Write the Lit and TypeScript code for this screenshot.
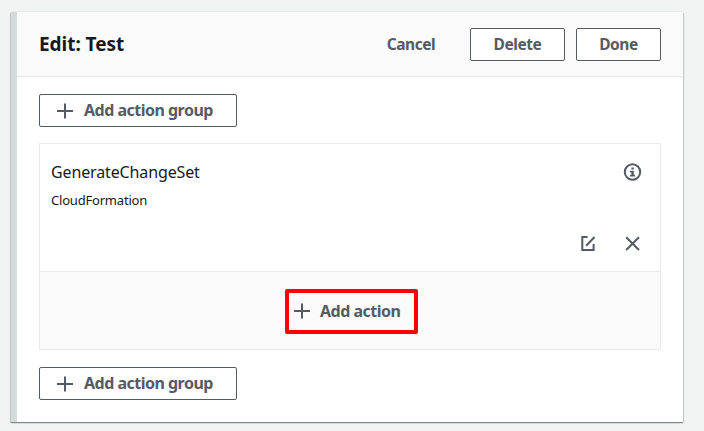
import { LitElement, html, css, svg } from "lit";
import { customElement, property } from "lit/decorators.js";

@customElement("glyph-icon")
class GlyphIcon extends LitElement {
  @property() name = "plus";

  static styles = css`
    :host { display: block; width: 18px; height: 18px; flex: none; }
    svg { display: block; overflow: visible; fill: none; stroke: #545b64; stroke-width: 2; }
    .solid { fill: #545b64; stroke: none; }
  `;

  private shape() {
    switch (this.name) {
      case "info":
        return svg`<circle cx="9.5" cy="9" r="7.7"></circle>
          <path class="solid" d="M8.4 4.4h2.4v2H8.4zM7 7.8h3.8v3.9h1.2v1.8H7v-1.8h1.4V9.4H7z"></path>`;
      case "edit":
        return svg`<path d="M8.6 3H3.3v13h11.3v-6M7.2 11.8L15.5 3"></path>`;
      case "close":
        return svg`<path d="M3.2 3.2l12.8 12.8M16 3.2L3.2 16"></path>`;
      default:
        return svg`<path d="M9 1.5v15M1 9h16"></path>`;
    }
  }

  render() {
    return html`<svg width="18" height="18" viewBox="0 0 18 18">${this.shape()}</svg>`;
  }
}

@customElement("app-root")
class AppRoot extends LitElement {
  static styles = css`
    :host {
      display: block; box-sizing: border-box; height: 431px; padding: 12px 21px 9px 11px;
      background: #f2f3f3; overflow: hidden;
      font-family: "Noto Sans", "Open Sans", sans-serif; color: #16191f;
    }
    * { box-sizing: border-box; }
    .panel {
      height: 410px; background: #fff; border-left: 6px solid #d5dbdb;
      box-shadow: 0 -1px 0 #e6eaea, 0 1px 1px rgba(0,28,36,.3), 1px 1px 1px rgba(0,28,36,.15), -1px 1px 1px rgba(0,28,36,.15);
    }
    .head {
      height: 65px; display: flex; align-items: center; background: #fafafa;
      border-bottom: 1px solid #e6eaea; padding: 0 22px;
    }
    h1 { margin: 0; flex: 1; font-size: 19px; line-height: 24px; font-weight: 700; letter-spacing: -.05px; white-space: nowrap; }
    button {
      display: flex; align-items: center; height: 33px; margin: 0; padding: 0; border: 1px solid #545b64;
      border-radius: 2px; background: #fff; color: #545b64; font: 700 16px/20px "Noto Sans", sans-serif;
      letter-spacing: -.51px; white-space: nowrap;
    }
    .bare { border-color: transparent; background: transparent; }
    .head button { justify-content: center; font-size: 15.5px; letter-spacing: -.45px; }
    .cancel { width: 90px; margin-right: 14px; }
    .delete { width: 95px; margin-right: 11px; }
    .done { width: 85px; }
    .body { padding: 17px 22px 0; }
    .group { width: 198px; padding-left: 16px; gap: 10px; }
    .group span, .add span { padding-bottom: 1px; }
    .stage { margin: 16px 0 17px; height: 207px; border: 1px solid #e6eaea; display: flex; flex-direction: column; }
    .action { height: 127px; padding: 16px 19px 0 11px; display: flex; justify-content: space-between; }
    .name { font-size: 16px; line-height: 24px; letter-spacing: -.13px; }
    .provider { font-size: 13px; line-height: 18px; margin-top: 7px; letter-spacing: -.2px; }
    .tools { display: flex; flex-direction: column; align-items: flex-end; padding-top: 3px; }
    .row { display: flex; gap: 26px; margin-top: 53px; }
    .foot { flex: 1; border-top: 1px solid #e6eaea; background: #fafafa; display: flex; padding: 17px 0 0 245px; }
    .add { width: 133px; height: 45px; border: 4px solid #f00; border-radius: 2px; background: #fafafa; padding: 0 0 1px 4px; gap: 9px; }
  `;

  render() {
    const group = html`<button class="group"><glyph-icon name="plus"></glyph-icon><span>Add action group</span></button>`;
    return html`
      <section class="panel">
        <header class="head">
          <h1><span>Edit: Test</span></h1>
          <button class="bare cancel">Cancel</button>
          <button class="delete">Delete</button>
          <button class="done">Done</button>
        </header>
        <div class="body">
          ${group}
          <div class="stage">
            <div class="action">
              <div><div class="name">GenerateChangeSet</div><div class="provider">CloudFormation</div></div>
              <div class="tools">
                <glyph-icon name="info"></glyph-icon>
                <div class="row"><glyph-icon name="edit"></glyph-icon><glyph-icon name="close"></glyph-icon></div>
              </div>
            </div>
            <div class="foot">
              <button class="add"><glyph-icon name="plus"></glyph-icon><span>Add action</span></button>
            </div>
          </div>
          ${group}
        </div>
      </section>`;
  }
}
